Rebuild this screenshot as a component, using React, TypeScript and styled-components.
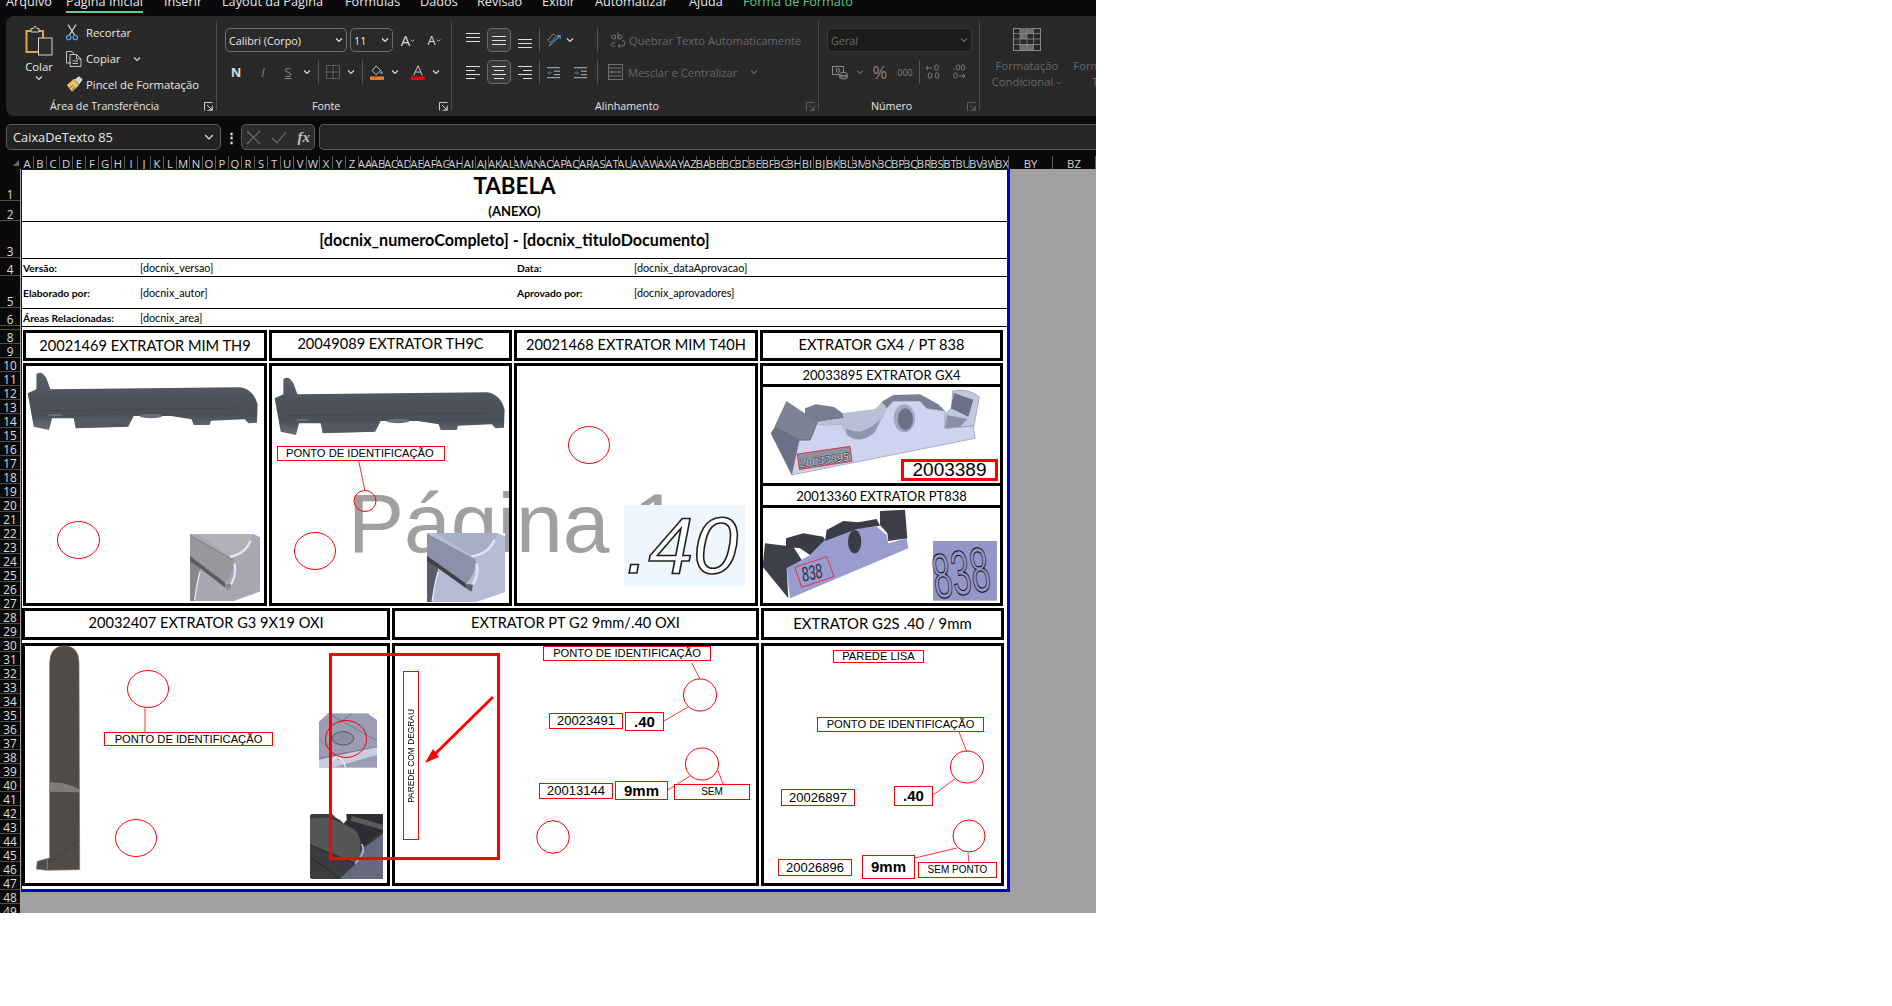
import React from "react";
import styled, { createGlobalStyle } from "styled-components";

const Global = createGlobalStyle`
  html, body { margin: 0; padding: 0; background: #fff; }
  * { box-sizing: border-box; }
`;

const UI = `"Open Sans", "Noto Sans", sans-serif`;
const SHEET = `Lato, "Liberation Sans", sans-serif`;
const ARIAL = `"Liberation Sans", Arial, sans-serif`;

const App_ = styled.div`
  width: 1096px;
  height: 913px;
  background: #0a0a0a;
  overflow: hidden;
  display: flex;
  flex-direction: column;
  font-family: ${UI};
  color: #e8e8e8;
`;

const MenuBar = styled.div`
  height: 16px;
  padding-left: 6px;
  display: flex;
  align-items: flex-start;
  overflow: hidden;
  flex: none;
`;
const Tab = styled.div<{ $w: number; $accent?: boolean }>`
  width: ${(p) => p.$w}px;
  flex: none;
  margin-top: -8px;
  font-size: 12.7px;
  line-height: 19px;
  white-space: nowrap;
  color: ${(p) => (p.$accent ? "#5fc48a" : "#e8e8e8")};
`;
const TabText = styled.span<{ $active?: boolean }>`
  display: inline-block;
  height: 21px;
  border-bottom: 2px solid ${(p) => (p.$active ? "#6fc795" : "transparent")};
`;

const Ribbon = styled.div`
  margin-left: 6px;
  height: 100px;
  padding: 5px 0 6px;
  background: #292929;
  border-radius: 8px 0 0 8px;
  display: flex;
  overflow: hidden;
  flex: none;
  font-size: 11px;
`;
const Group = styled.div<{ $w: number; $last?: boolean }>`
  width: ${(p) => p.$w}px;
  flex: none;
  display: flex;
  flex-direction: column;
  border-right: ${(p) => (p.$last ? "none" : "1px solid #4a4a4a")};
`;
const GroupBody = styled.div<{ $pl?: number; $row?: boolean }>`
  height: 76px;
  flex: none;
  padding-left: ${(p) => p.$pl ?? 0}px;
  display: flex;
  flex-direction: ${(p) => (p.$row ? "row" : "column")};
`;
const GroupFooter = styled.div<{ $pl: number; $dim?: boolean }>`
  height: 17px;
  padding: 2px 3px 0 ${(p) => p.$pl}px;
  display: flex;
  align-items: center;
  justify-content: space-between;
  font-size: 10.7px;
  line-height: 15px;
  color: #e4e4e4;
  white-space: nowrap;
  svg { color: ${(p) => (p.$dim ? "#666" : "#ddd")}; }
`;

const PasteCol = styled.div`
  width: 60px;
  flex: none;
  padding: 4px 0 0 6px;
  display: flex;
  flex-direction: column;
  align-items: center;
`;
const PasteLabel = styled.div`
  margin-top: 3px;
  font-size: 11.3px;
  line-height: 15px;
`;
const ChevWrap = styled.div<{ $ml?: number; $dim?: boolean; $w?: number }>`
  flex: none;
  display: flex;
  align-items: center;
  justify-content: center;
  width: ${(p) => p.$w ?? 10}px;
  margin-left: ${(p) => p.$ml ?? 0}px;
  color: ${(p) => (p.$dim ? "#666" : "#ddd")};
`;
const SmallCol = styled.div`
  margin-top: -1px;
  display: flex;
  flex-direction: column;
`;
const SmallRow = styled.div`
  height: 26px;
  display: flex;
  align-items: center;
  white-space: nowrap;
  font-size: 11.3px;
`;
const SmallIcon = styled.div`
  width: 20px;
  flex: none;
  display: flex;
  align-items: center;
`;

const ToolRow = styled.div<{ $mt?: number }>`
  height: 24px;
  flex: none;
  margin-top: ${(p) => p.$mt ?? 0}px;
  display: flex;
  align-items: center;
`;
const Select = styled.div<{ $w: number; $ml?: number; $dark?: boolean }>`
  width: ${(p) => p.$w}px;
  height: 24px;
  flex: none;
  margin-left: ${(p) => p.$ml ?? 0}px;
  padding: 0 3px;
  display: flex;
  align-items: center;
  justify-content: space-between;
  border: 1px solid ${(p) => (p.$dark ? "#3a3a3a" : "#6e6e6e")};
  border-radius: 5px;
  background: ${(p) => (p.$dark ? "#1c1c1c" : "#2a2a2a")};
  color: ${(p) => (p.$dark ? "#6a6a6a" : "#e8e8e8")};
  font-size: 10.8px;
  white-space: nowrap;
`;
const Tool = styled.div<{ $w: number; $ml?: number; $active?: boolean; $h?: number }>`
  width: ${(p) => p.$w}px;
  height: ${(p) => p.$h ?? 24}px;
  flex: none;
  margin-left: ${(p) => p.$ml ?? 0}px;
  display: flex;
  align-items: center;
  justify-content: center;
  border: 1px solid ${(p) => (p.$active ? "#6e6e6e" : "transparent")};
  border-radius: 5px;
  background: ${(p) => (p.$active ? "#383838" : "transparent")};
`;
const FontLetter = styled.span<{ $bold?: boolean; $italic?: boolean; $under?: boolean; $size?: number; $dim?: boolean }>`
  font-family: ${UI};
  font-size: ${(p) => p.$size ?? 13}px;
  font-weight: ${(p) => (p.$bold ? 700 : 400)};
  font-style: ${(p) => (p.$italic ? "italic" : "normal")};
  text-decoration: ${(p) => (p.$under ? "underline" : "none")};
  color: ${(p) => (p.$dim ? "#808080" : "#dadada")};
  line-height: 1;
`;
const VSep = styled.div<{ $ml?: number; $h?: number }>`
  width: 1px;
  height: ${(p) => p.$h ?? 24}px;
  flex: none;
  margin-left: ${(p) => p.$ml ?? 0}px;
  background: #555;
`;
const DisabledText = styled.span<{ $ml?: number }>`
  margin-left: ${(p) => p.$ml ?? 0}px;
  color: #676767;
  font-size: 11.2px;
  white-space: nowrap;
`;
const StyleBtn = styled.div<{ $w: number }>`
  width: ${(p) => p.$w}px;
  flex: none;
  padding-top: 7px;
  display: flex;
  flex-direction: column;
  align-items: center;
  color: #676767;
  font-size: 11.3px;
  line-height: 16px;
  white-space: nowrap;
`;
const StyleIconSlot = styled.div`
  height: 23px;
  margin-bottom: 7px;
`;

const FormulaBar = styled.div`
  height: 26px;
  margin-top: 8px;
  padding-left: 6px;
  display: flex;
  align-items: stretch;
  flex: none;
`;
const NameBox = styled.div`
  width: 215px;
  flex: none;
  padding: 0 6px;
  display: flex;
  align-items: center;
  justify-content: space-between;
  background: #232323;
  border: 1px solid #5a5a5a;
  border-radius: 5px;
  font-size: 12.8px;
`;
const Dots = styled.div`
  width: 20px;
  flex: none;
  display: flex;
  align-items: center;
  justify-content: center;
  font-weight: 700;
  font-size: 13px;
`;
const FxBox = styled.div`
  width: 74px;
  flex: none;
  padding: 0 4px;
  display: flex;
  align-items: center;
  justify-content: space-between;
  background: #2b2b2b;
  border: 1px solid #5a5a5a;
  border-radius: 5px;
`;
const Fx = styled.span`
  font-family: "Liberation Serif", serif;
  font-style: italic;
  font-size: 15px;
  font-weight: 700;
  color: #bdbdbd;
`;
const FormulaInput = styled.div`
  flex: 1;
  margin-left: 4px;
  background: #252525;
  border: 1px solid #5a5a5a;
  border-right: none;
  border-radius: 5px 0 0 5px;
`;

const ColHeader = styled.div`
  height: 13px;
  margin-top: 6px;
  display: flex;
  flex: none;
  overflow: hidden;
`;
const Corner = styled.div`
  width: 21px;
  flex: none;
  display: flex;
  align-items: center;
  justify-content: flex-end;
  padding-right: 2px;
`;
const ColCell = styled.div<{ $w: number }>`
  width: ${(p) => p.$w}px;
  flex: none;
  display: flex;
  justify-content: center;
  overflow: hidden;
  border-right: 1px solid #5c5c5c;
  font-size: 11.3px;
  line-height: 15px;
  color: #d4d4d4;
  white-space: nowrap;
`;

const Main = styled.div`
  flex: 1;
  display: flex;
  min-height: 0;
`;
const RowHeader = styled.div`
  width: 20px;
  flex: none;
  overflow: hidden;
  background: #0a0a0a;
`;
const RowCell = styled.div<{ $h: number }>`
  height: ${(p) => p.$h}px;
  display: flex;
  align-items: flex-end;
  justify-content: center;
  border-bottom: 1px solid #4c4c4c;
  font-size: 11.8px;
  line-height: 12px;
  color: #dedede;
`;
const SheetArea = styled.div`
  flex: 1;
  position: relative;
  background: #a0a0a0;
  overflow: hidden;
`;
const Sheet = styled.div`
  position: relative;
  width: 989px;
  height: 723px;
  margin-left: 1px;
  background: #fff;
  border: solid #0000c8;
  border-width: 1px 3px 3px 1px;
  font-family: ${SHEET};
  color: #000;
`;
const Watermark = styled.div`
  position: absolute;
  left: 326px;
  top: 305px;
  font-family: ${ARIAL};
  font-size: 84px;
  line-height: 96px;
  color: #a0a0a0;
  white-space: nowrap;
`;
const TitleBlock = styled.div`
  position: relative;
  height: 52px;
  padding-top: 1px;
  border-bottom: 1px solid #000;
  display: flex;
  flex-direction: column;
  align-items: center;
  font-weight: 700;
`;
const MainTitle = styled.div`
  font-size: 22.4px;
  line-height: 30px;
`;
const SubTitle = styled.div`
  font-size: 13px;
  line-height: 20px;
`;
const DocRow = styled.div`
  height: 37px;
  border-bottom: 1px solid #000;
  display: flex;
  align-items: center;
  justify-content: center;
  padding: 2px 0 4px;
  font-size: 16.1px;
  font-weight: 700;
`;
const InfoRow = styled.div<{ $h: number }>`
  height: ${(p) => p.$h}px;
  border-bottom: 1px solid #000;
  padding-left: 1px;
  display: grid;
  grid-template-columns: 117px 377px 117px 1fr;
  align-items: center;
  font-size: 10.3px;
`;
const InfoKey = styled.span`
  font-weight: 700;
  white-space: nowrap;
`;
const InfoVal = styled.span`
  font-size: 10.8px;
`;
const UpperGrid = styled.div`
  position: relative;
  margin: 3px 0 0 1px;
  display: grid;
  grid-template-columns: 244px 243px 244px 243px;
  grid-template-rows: 31px 243px;
  gap: 2px;
`;
const LowerGrid = styled.div`
  position: relative;
  margin: 2px 0 0 0;
  display: grid;
  grid-template-columns: 368px 367px 243px;
  grid-template-rows: 32px 243px;
  column-gap: 2px;
  row-gap: 3px;
`;
const Cell = styled.div<{ $up?: number; $size?: number }>`
  border: 3px solid #000;
  display: flex;
  align-items: center;
  justify-content: center;
  padding-bottom: ${(p) => p.$up ?? 0}px;
  font-size: ${(p) => p.$size ?? 14.6}px;
  white-space: nowrap;
`;
const StackCell = styled.div`
  border: 3px solid #000;
  display: grid;
  grid-template-rows: 18px 102px 19px 1fr;
`;
const SubHead = styled.div`
  display: flex;
  align-items: center;
  justify-content: center;
  font-size: 13px;
  white-space: nowrap;
`;
const SubPic = styled.div<{ $tall?: boolean }>`
  border-top: 3px solid #000;
  border-bottom: ${(p) => (p.$tall ? "0" : "3px solid #000")};
`;

const Pic = styled.svg<{ $x: number; $y: number; $w: number; $h: number }>`
  position: absolute;
  left: ${(p) => p.$x - 20}px;
  top: ${(p) => p.$y - 169}px;
  width: ${(p) => p.$w}px;
  height: ${(p) => p.$h}px;
  display: block;
`;
const Shapes = styled.svg`
  position: absolute;
  left: 0;
  top: 0;
  width: 1076px;
  height: 744px;
  pointer-events: none;
`;
const RedLabel = styled.div<{ $x: number; $y: number; $x2: number; $y2: number; $size: number; $bold?: boolean; $left?: number; $thick?: number }>`
  position: absolute;
  left: ${(p) => p.$x - 20}px;
  top: ${(p) => p.$y - 169}px;
  width: ${(p) => p.$x2 - p.$x}px;
  height: ${(p) => p.$y2 - p.$y}px;
  border: ${(p) => p.$thick ?? 1}px solid #f00;
  display: flex;
  align-items: center;
  justify-content: ${(p) => (p.$left !== undefined ? "flex-start" : "center")};
  padding-left: ${(p) => p.$left ?? 0}px;
  padding-bottom: 1px;
  font-family: ${ARIAL};
  font-size: ${(p) => p.$size}px;
  font-weight: ${(p) => (p.$bold ? 700 : 400)};
  color: #000;
  background: #fff;
  white-space: nowrap;
`;
const VerticalLabel = styled(RedLabel)`
  writing-mode: vertical-rl;
  padding: 0;
  span { transform: rotate(180deg); display: block; }
`;

const Chev = ({ s = 8 }: { s?: number }) => (
  <svg width={s} height={s} viewBox="0 0 8 8"><path d="M1 2.5 L4 5.5 L7 2.5" fill="none" stroke="currentColor" strokeWidth="1.1" /></svg>
);
const Launcher = () => (
  <svg width="9" height="9" viewBox="0 0 9 9" fill="none" stroke="currentColor" strokeWidth="0.9">
    <path d="M0.5 8.5 V0.5 H8.5" /><path d="M3 3 L8 8 M8 4.5 V8 H4.5" /><path d="M3 8.5 H8.5 V3" opacity="0.5" />
  </svg>
);
const PasteIcon = () => (
  <svg width="28" height="31" viewBox="0 0 28 31" fill="none">
    <path d="M1.5 6 H18 V27 H1.5 Z" stroke="#e9a23b" strokeWidth="2" />
    <path d="M6 6 V3.5 H8.5 L10 1 L12 3.5 H14 V7 H6 Z" fill="#2c2c2c" stroke="#cfcfcf" />
    <rect x="13.5" y="13" width="13.5" height="17" fill="#2c2c2c" stroke="#d2d2d2" />
  </svg>
);
const ScissorIcon = () => (
  <svg width="12" height="17" viewBox="0 0 12 17" fill="none">
    <path d="M2 0.5 L8.5 11 M10 0.5 L3.5 11" stroke="#dcdcdc" strokeWidth="1.2" />
    <circle cx="2.7" cy="13.5" r="2.2" stroke="#4aa3df" strokeWidth="1.3" />
    <circle cx="9.3" cy="13.5" r="2.2" stroke="#4aa3df" strokeWidth="1.3" />
  </svg>
);
const CopyIcon = () => (
  <svg width="16" height="16" viewBox="0 0 16 16" fill="none" stroke="#d4d4d4" strokeWidth="0.9">
    <path d="M5 12 H0.5 V0.5 H6 L8 3" />
    <path d="M4 3.5 H10.5 L15 8 V15.5 H4 Z" />
    <path d="M10.5 3.5 V8 H15 M6.5 10 H12 M6.5 12.5 H12" />
  </svg>
);
const PainterIcon = () => (
  <svg width="17" height="16" viewBox="0 0 17 16" fill="none">
    <path d="M1 9 L8 3 L13 9 L6 15.5 Q4 13 1 9 Z" fill="#e8c26a" stroke="#d8b25a" strokeWidth="0.5" />
    <path d="M4 12 L7 9 M6 14 L9 11" stroke="#7d6a36" />
    <path d="M9 4 L13 0.8 L16 3.5 L13 8" fill="#d8d8d8" stroke="#eee" />
  </svg>
);
const BordersIcon = () => (
  <svg width="16" height="16" viewBox="0 0 16 16" fill="none" stroke="#9a9a9a" strokeDasharray="1 1">
    <rect x="0.5" y="0.5" width="15" height="15" /><path d="M8 0 V16 M0 8 H16" />
  </svg>
);
const FillIcon = () => (
  <svg width="16" height="17" viewBox="0 0 16 17" fill="none">
    <path d="M7 1 L12 6 L7 11 L2.5 6.5 Z" stroke="#dcdcdc" /><path d="M13 6 L15 10 L11 10 Z" fill="#4aa3df" />
    <rect y="13" width="16" height="4" fill="#e97b2c" />
  </svg>
);
const ColorA = () => (
  <svg width="16" height="17" viewBox="0 0 16 17" fill="none">
    <path d="M3 12 L8 0.8 L13 12 M5 8 H11" stroke="#dcdcdc" /><rect y="13" width="16" height="4" fill="#f0000f" />
  </svg>
);
const AlignIcon = ({ kind, w = 14 }: { kind: "l" | "c" | "r" | "t" | "m" | "b"; w?: number }) => {
  const rows =
    kind === "l" ? [[0, 14], [0, 9], [0, 14], [0, 9]] :
    kind === "r" ? [[0, 14], [5, 14], [0, 14], [5, 14]] :
    kind === "c" ? [[0, 14], [2, 12], [0, 14], [2, 12]] : [[0, 14], [0, 14], [0, 14]];
  const off = kind === "t" ? -3 : kind === "b" ? 3 : 0;
  const gap = 4;
  return (
    <svg width={w} height="16" viewBox="0 0 14 16" stroke="#dedede" strokeWidth="1">
      {rows.map(([a, b], i) => (
        <line key={i} x1={a} x2={b} y1={(rows.length === 4 ? 2 : 4) + i * gap + off + 0.5} y2={(rows.length === 4 ? 2 : 4) + i * gap + off + 0.5} />
      ))}
    </svg>
  );
};
const OrientIcon = () => (
  <svg width="16" height="16" viewBox="0 0 16 16" fill="none">
    <path d="M1 8 L7 1 L10 4 L4 11 Z" stroke="#bfbfbf" strokeDasharray="2 1" />
    <path d="M2 15 L15 3 M11 3 H15 V7" stroke="#4aa3df" strokeWidth="1.2" />
  </svg>
);
const IndentIcon = ({ dir }: { dir: "in" | "out" }) => (
  <svg width="15" height="13" viewBox="0 0 15 13" fill="none" stroke="#dcdcdc">
    <path d="M0 1 H15 M8 5 H15 M8 9 H15 M0 12.5 H15" strokeWidth="0.9" />
    <path d={dir === "in" ? "M6 7 H1 M3 5 L1 7 L3 9" : "M0 7 H5 M3 5 L5 7 L3 9"} stroke="#4aa3df" strokeOpacity="0.75" />
  </svg>
);
const MergeIcon = () => (
  <svg width="15" height="16" viewBox="0 0 15 16" fill="none" stroke="#707070">
    <rect x="0.5" y="0.5" width="14" height="15" /><path d="M0 4 H15 M0 12 H15 M3 8 H12 M4.5 6 L2.5 8 L4.5 10 M10.5 6 L12.5 8 L10.5 10" />
  </svg>
);
const CurrencyIcon = () => (
  <svg width="16" height="15" viewBox="0 0 16 15" fill="none" stroke="#8a8a8a">
    <rect x="0.5" y="1.5" width="11" height="8" /><circle cx="6" cy="5.5" r="1.8" /><ellipse cx="11.5" cy="9" rx="3.8" ry="1.6" fill="#2a2a2a" /><path d="M7.8 9 V13 Q11.5 15.5 15.2 13 V9 M7.8 11 Q11.5 13.5 15.2 11" />
  </svg>
);
const DecimalIcon = ({ up }: { up: boolean }) => (
  <svg width="16" height="16" viewBox="0 0 16 16" fill="none" stroke="#858585" strokeWidth="0.9">
    {up ? (
      <>
        <path d="M1 4 H7 M3 2 L1 4 L3 6" /><ellipse cx="11.5" cy="3.5" rx="1.8" ry="2.8" />
        <path d="M0.8 13.5 V14" /><ellipse cx="5" cy="11.5" rx="1.8" ry="2.8" /><ellipse cx="12" cy="11.5" rx="1.8" ry="2.8" />
      </>
    ) : (
      <>
        <path d="M9 12 H15 M13 10 L15 12 L13 14" /><ellipse cx="5.5" cy="11.5" rx="1.8" ry="2.8" />
        <path d="M4 4.5 V5.5" /><ellipse cx="8" cy="3.5" rx="1.8" ry="2.8" /><ellipse cx="13" cy="3.5" rx="1.8" ry="2.8" />
      </>
    )}
  </svg>
);
const WrapIcon = () => (
  <svg width="16" height="16" viewBox="0 0 16 16" fill="none" stroke="#707070">
    <circle cx="3.5" cy="5" r="2" /><path d="M5.5 3 V7 M8 0.5 V7" /><circle cx="10" cy="5" r="2" />
    <path d="M5 11 A2 2 0 1 0 5 14" /><path d="M8 14 H12 Q15 14 15 11 Q15 8.5 12 8.5 M10 12 L8 14 L10 16" />
  </svg>
);
const CondIcon = () => (
  <svg width="28" height="23" viewBox="0 0 28 23">
    <rect x="0.5" y="0.5" width="27" height="22" fill="none" stroke="#8a8a8a" />
    <path d="M7 0 H20 V6 H14 V11 H7 V16 H20 V22 H7 V0" fill="#6e6e6e" />
    <path d="M0 5.5 H28 M0 11 H28 M0 16.5 H28 M7 0 V23 M14 0 V23 M20.5 0 V23" stroke="#8a8a8a" strokeWidth="0.8" />
  </svg>
);
const XMark = () => <svg width="15" height="15" viewBox="0 0 15 15"><path d="M1 1 L14 14 M14 1 L1 14" stroke="#707070" strokeWidth="1.1" /></svg>;
const CheckMark = () => <svg width="16" height="13" viewBox="0 0 16 13"><path d="M1 7 L6 12 L15 1" fill="none" stroke="#707070" strokeWidth="1.1" /></svg>;

const Soft = ({ id, d = 1 }: { id: string; d?: number }) => (
  <filter id={id} x="-5%" y="-5%" width="110%" height="110%"><feGaussianBlur stdDeviation={d} /></filter>
);

const ExtractorSide = ({ x, y, id }: { x: number; y: number; id: string }) => (
  <Pic $x={x} $y={y} $w={233.3} $h={63.3} viewBox="80 630 700 190">
    <defs>
      <linearGradient id={id + "g"} x1="0" y1="0" x2="0" y2="1"><stop offset="0" stopColor="#5c6069" /><stop offset="0.45" stopColor="#4d5159" /><stop offset="0.75" stopColor="#4c5058" /><stop offset="1" stopColor="#6a6e77" /></linearGradient>
      <Soft id={id} d={2} />
    </defs>
    <g filter={`url(#${id})`}>
      <path d="M108 642 Q125 630 138 655 L150 688 L720 682 Q762 690 772 735 L770 788 L745 790 L733 778 L632 782 L628 795 L580 795 L574 778 L512 768 L400 768 L384 800 L226 805 L220 775 L155 775 L146 810 L100 800 L82 700 L108 688 Z" fill={`url(#${id}g)`} />
      <path d="M120 752 L720 744" stroke="#3e4148" strokeWidth="2" fill="none" />
      <path d="M225 772 L385 772 L380 800 L226 803 Z" fill="#555962" />
      <ellipse cx="452" cy="768" rx="34" ry="7" fill="#6b6f79" />
      <ellipse cx="165" cy="765" rx="22" ry="3" fill="#6b6f79" />
    </g>
  </Pic>
);
const CornerPart = ({ x, y, w, h, c, id }: { x: number; y: number; w: number; h: number; c: string[]; id: string }) => (
  <Pic $x={x} $y={y} $w={w} $h={h} viewBox="0 0 210 200" preserveAspectRatio="none">
    <defs><Soft id={id} d={1} /></defs>
    <rect width="210" height="200" fill={c[0]} />
    <g filter={`url(#${id})`}>
      <path d="M0 70 L30 100 L28 120 L14 200 H0 Z" fill={c[3]} />
      <path d="M30 112 Q20 150 14 198" stroke="#e4e6f2" strokeWidth="4" fill="none" />
      <path d="M0 67 L105 147 L105 160 L30 102 L0 82 Z" fill={c[4]} />
      <path d="M0 4 L115 72 L132 82 Q128 125 105 147 L0 67 Z" fill={c[1]} />
      <path d="M22 0 L115 62 L130 70 L165 45 L185 15 L190 0 Z" fill={c[2]} />
      <path d="M0 4 L115 70 L130 78" stroke="#4c4c52" strokeWidth="1.4" fill="none" />
      <path d="M0 67 L105 147" stroke="#33333a" strokeWidth="1.6" fill="none" />
      <path d="M120 68 Q155 62 172 38 L182 20" stroke="#e2e4f2" strokeWidth="7" fill="none" />
      <path d="M134 88 Q140 125 122 152" stroke="#e2e4f2" strokeWidth="7" fill="none" />
      <path d="M106 148 L124 150 L120 170 L105 160 Z" fill={c[3]} />
    </g>
    <path d="M190 0 H210 V10 Z M210 172 V200 H132 Z" fill="#fff" />
  </Pic>
);

const App = () => {
  const letters = "ABCDEFGHIJKLMNOPQRSTUVWXYZ".split("");
  const cols = [...letters, ...letters.map((l) => "A" + l), ...letters.slice(0, 24).map((l) => "B" + l)];
  const rows: [string, number][] = [["1", 32], ["2", 20], ["3", 37], ["4", 18], ["5", 32], ["6", 18], ["", 4]];
  for (let i = 8; i <= 49; i++) rows.push([String(i), 14]);
  const tabs: [string, number][] = [["Arquivo", 60], ["Página Inicial", 98], ["Inserir", 58], ["Layout da Página", 123], ["Fórmulas", 75], ["Dados", 57], ["Revisão", 65], ["Exibir", 53], ["Automatizar", 94], ["Ajuda", 54], ["Forma de Formato", 130]];
  const ellipses = [
    [78.5, 540, 21, 18.5], [315, 551, 20.5, 18.5], [365, 501, 11, 10.5], [589, 445, 20.5, 18.5],
    [148, 689, 20.5, 18.5], [136, 838, 20.5, 18.5], [346, 739, 20.5, 18.5],
    [700, 695, 16.7, 16], [702, 764, 16.7, 16], [553, 837, 16.3, 16.3], [967, 767, 16.7, 16], [969, 836, 16, 16],
  ];
  const lines = [
    [358.7, 461, 365, 491], [145, 707, 145, 732], [691.7, 663, 700, 679], [664, 721, 688, 707],
    [668, 790, 690, 776], [717, 768, 723, 784], [959, 732, 967, 752], [933, 795, 955, 779],
    [915, 858, 957, 848], [968, 853, 969, 863],
  ];
  return (
    <App_>
      <Global />
      <MenuBar>
        {tabs.map(([t, w]) => (
          <Tab key={t} $w={w} $accent={t === "Forma de Formato"}>
            <TabText $active={t === "Página Inicial"}>{t}</TabText>
          </Tab>
        ))}
      </MenuBar>
      <Ribbon>
        <Group $w={211}>
          <GroupBody $row>
            <PasteCol>
              <PasteIcon />
              <PasteLabel>Colar</PasteLabel>
              <ChevWrap><Chev /></ChevWrap>
            </PasteCol>
            <SmallCol>
              <SmallRow><SmallIcon><ScissorIcon /></SmallIcon>Recortar</SmallRow>
              <SmallRow><SmallIcon><CopyIcon /></SmallIcon>Copiar<ChevWrap $ml={11}><Chev /></ChevWrap></SmallRow>
              <SmallRow><SmallIcon><PainterIcon /></SmallIcon>Pincel de Formatação</SmallRow>
            </SmallCol>
          </GroupBody>
          <GroupFooter $pl={44}><span>Área de Transferência</span><Launcher /></GroupFooter>
        </Group>
        <Group $w={235}>
          <GroupBody $pl={8}>
            <ToolRow $mt={7}>
              <Select $w={122}>Calibri (Corpo)<Chev /></Select>
              <Select $w={43} $ml={3}>11<Chev /></Select>
              <Tool $w={22} $ml={4}><FontLetter $size={15}>A</FontLetter><Chev s={5} /></Tool>
              <Tool $w={22} $ml={4}><FontLetter $size={13}>A</FontLetter><Chev s={5} /></Tool>
            </ToolRow>
            <ToolRow $mt={8}>
              <Tool $w={22}><FontLetter $bold>N</FontLetter></Tool>
              <Tool $w={22} $ml={5}><FontLetter $italic $dim>I</FontLetter></Tool>
              <Tool $w={22} $ml={3}><FontLetter $under $dim>S</FontLetter></Tool>
              <ChevWrap $ml={3}><Chev /></ChevWrap>
              <VSep $ml={6} />
              <Tool $w={16} $ml={6}><BordersIcon /></Tool>
              <ChevWrap $ml={5}><Chev /></ChevWrap>
              <VSep $ml={6} />
              <Tool $w={16} $ml={6}><FillIcon /></Tool>
              <ChevWrap $ml={5}><Chev /></ChevWrap>
              <Tool $w={16} $ml={10}><ColorA /></Tool>
              <ChevWrap $ml={5}><Chev /></ChevWrap>
            </ToolRow>
          </GroupBody>
          <GroupFooter $pl={95}><span>Fonte</span><Launcher /></GroupFooter>
        </Group>
        <Group $w={367}>
          <GroupBody $pl={9}>
            <ToolRow $mt={7}>
              <Tool $w={24}><AlignIcon kind="t" /></Tool>
              <Tool $w={24} $ml={2} $active><AlignIcon kind="m" /></Tool>
              <Tool $w={24} $ml={2}><AlignIcon kind="b" /></Tool>
              <VSep $ml={2} />
              <Tool $w={16} $ml={6}><OrientIcon /></Tool>
              <ChevWrap $ml={3}><Chev /></ChevWrap>
              <VSep $ml={22} />
              <ChevWrap $w={16} $ml={12}><WrapIcon /></ChevWrap>
              <DisabledText $ml={3}>Quebrar Texto Automaticamente</DisabledText>
            </ToolRow>
            <ToolRow $mt={8}>
              <Tool $w={24}><AlignIcon kind="l" /></Tool>
              <Tool $w={24} $ml={2} $active><AlignIcon kind="c" /></Tool>
              <Tool $w={24} $ml={2}><AlignIcon kind="r" /></Tool>
              <VSep $ml={2} />
              <Tool $w={15} $ml={6}><IndentIcon dir="in" /></Tool>
              <Tool $w={15} $ml={12}><IndentIcon dir="out" /></Tool>
              <VSep $ml={9} />
              <ChevWrap $w={15} $ml={10}><MergeIcon /></ChevWrap>
              <DisabledText $ml={5}>Mesclar e Centralizar</DisabledText>
              <ChevWrap $ml={12} $dim><Chev /></ChevWrap>
            </ToolRow>
          </GroupBody>
          <GroupFooter $pl={143} $dim><span>Alinhamento</span><Launcher /></GroupFooter>
        </Group>
        <Group $w={161}>
          <GroupBody $pl={8}>
            <ToolRow $mt={7}>
              <Select $w={145} $dark>Geral<Chev /></Select>
            </ToolRow>
            <ToolRow $mt={8}>
              <ChevWrap $w={16} $ml={5}><CurrencyIcon /></ChevWrap>
              <ChevWrap $ml={7} $dim><Chev /></ChevWrap>
              <Tool $w={18} $ml={6}><FontLetter $size={18} $dim>%</FontLetter></Tool>
              <Tool $w={18} $ml={7}><FontLetter $size={9} $dim>000</FontLetter></Tool>
              <VSep $ml={5} />
              <ChevWrap $w={16} $ml={5}><DecimalIcon up /></ChevWrap>
              <ChevWrap $w={16} $ml={9}><DecimalIcon up={false} /></ChevWrap>
            </ToolRow>
          </GroupBody>
          <GroupFooter $pl={52} $dim><span>Número</span><Launcher /></GroupFooter>
        </Group>
        <Group $w={116} $last>
          <GroupBody $row $pl={3}>
            <StyleBtn $w={88}>
              <StyleIconSlot><CondIcon /></StyleIconSlot>
              <span>Formatação</span>
              <span>Condicional <Chev s={6} /></span>
            </StyleBtn>
            <StyleBtn $w={86}>
              <StyleIconSlot />
              <span>Formatar como</span>
              <span>Tabela <Chev s={6} /></span>
            </StyleBtn>
          </GroupBody>
        </Group>
      </Ribbon>
      <FormulaBar>
        <NameBox>CaixaDeTexto 85<Chev s={10} /></NameBox>
        <Dots>⋮</Dots>
        <FxBox><XMark /><CheckMark /><Fx>fx</Fx></FxBox>
        <FormulaInput />
      </FormulaBar>
      <ColHeader>
        <Corner><svg width="6" height="6" viewBox="0 0 6 6"><path d="M6 0 V6 H0 Z" fill="#6a6a6a" /></svg></Corner>
        {cols.map((c) => <ColCell key={c} $w={13}>{c}</ColCell>)}
        <ColCell $w={44}>BY</ColCell>
        <ColCell $w={43}>BZ</ColCell>
      </ColHeader>
      <Main>
        <RowHeader>
          {rows.map(([r, h], i) => <RowCell key={i} $h={h}>{r}</RowCell>)}
        </RowHeader>
        <SheetArea>
          <Sheet>
            <Watermark>Página 1</Watermark>
            <TitleBlock>
              <MainTitle>TABELA</MainTitle>
              <SubTitle>(ANEXO)</SubTitle>
            </TitleBlock>
            <DocRow>[docnix_numeroCompleto] - [docnix_tituloDocumento]</DocRow>
            <InfoRow $h={18}><InfoKey>Versão:</InfoKey><InfoVal>[docnix_versao]</InfoVal><InfoKey>Data:</InfoKey><InfoVal>[docnix_dataAprovacao]</InfoVal></InfoRow>
            <InfoRow $h={32}><InfoKey>Elaborado por:</InfoKey><InfoVal>[docnix_autor]</InfoVal><InfoKey>Aprovado por:</InfoKey><InfoVal>[docnix_aprovadores]</InfoVal></InfoRow>
            <InfoRow $h={18}><InfoKey>Áreas Relacionadas:</InfoKey><InfoVal>[docnix_area]</InfoVal></InfoRow>
            <UpperGrid>
              <Cell>20021469 EXTRATOR MIM TH9</Cell>
              <Cell $up={4}>20049089 EXTRATOR TH9C</Cell>
              <Cell $up={2}>20021468 EXTRATOR MIM T40H</Cell>
              <Cell $up={2}>EXTRATOR GX4 / PT 838</Cell>
              <Cell />
              <Cell />
              <Cell />
              <StackCell>
                <SubHead>20033895 EXTRATOR GX4</SubHead>
                <SubPic />
                <SubHead>20013360 EXTRATOR PT838</SubHead>
                <SubPic $tall />
              </StackCell>
            </UpperGrid>
            <LowerGrid>
              <Cell $up={4}>20032407 EXTRATOR G3 9X19 OXI</Cell>
              <Cell $up={4}>EXTRATOR PT G2 9mm/.40 OXI</Cell>
              <Cell $up={2} $size={14.9}>EXTRATOR G2S .40 / 9mm</Cell>
              <Cell />
              <Cell />
              <Cell />
            </LowerGrid>
          </Sheet>

          <ExtractorSide x={26.67} y={370} id="exa" />
          <ExtractorSide x={273.7} y={375} id="exb" />
          <CornerPart id="cpa" x={190} y={534} w={70} h={67} c={["#a8a7b3", "#98989c", "#b2b2b6", "#88888c", "#5c5c62"]} />
          <CornerPart id="cpb" x={427} y={533} w={78} h={69} c={["#b6bcd6", "#8c91aa", "#a9aec6", "#5a5c6a", "#40414c"]} />

          <Pic $x={624} $y={505} $w={121} $h={82} viewBox="0 0 121 82">
            <rect width="121" height="82" fill="#f0f6fd" />
            <text x="2" y="68" fontFamily={ARIAL} fontStyle="italic" fontSize="80" fill="#fff" stroke="#1e1e1e" strokeWidth="1.6" textLength="112" lengthAdjust="spacingAndGlyphs">.40</text>
          </Pic>

          <Pic $x={760} $y={385} $w={245} $h={100} viewBox="0 0 735 300">
            <defs><Soft id="gx" d={1.2} /></defs>
            <g filter="url(#gx)">
              <path d="M95 270 L118 165 L150 165 L172 115 L190 120 L245 118 L262 150 Q300 180 345 140 Q365 100 380 70 L400 48 L480 48 L500 70 L555 78 L555 130 L640 122 L645 160 Z" fill="#cdd4f0" stroke="#8d93ad" strokeWidth="2" />
              <path d="M245 85 L345 72 Q360 60 365 50 L380 70 Q365 100 345 140 Q300 180 262 150 L245 118 Z" fill="#b9bfd6" />
              <path d="M262 150 Q300 180 345 140 L362 100 Q340 130 300 140 Q275 140 258 130 Z" fill="#8f95ae" />
              <path d="M32 145 L95 270 L118 165 L45 125 Z" fill="#6b7085" />
              <path d="M45 125 L80 50 L172 112 L150 165 L118 165 Z" fill="#7d8296" stroke="#555a6a" strokeWidth="2" />
              <path d="M135 70 L168 58 L222 66 L248 85 L250 100 L192 108 L172 112 L135 88 Z" fill="#777c90" />
              <path d="M172 112 L192 108 L250 100 L245 118 L190 120 Z" fill="#b9bfd6" />
              <path d="M365 50 L400 30 L480 28 L535 58 L555 78 L500 70 L480 48 L400 48 L380 70 Z" fill="#7a7f93" />
              <ellipse cx="433" cy="100" rx="32" ry="42" fill="#a3a9c2" />
              <ellipse cx="436" cy="103" rx="23" ry="33" fill="#6c7185" />
              <path d="M555 130 L558 85 L575 68 L578 18 Q625 8 658 36 L642 122 Z" fill="#c2c8e2" stroke="#8d93ad" strokeWidth="2" />
              <path d="M582 24 L640 44 L625 95 L572 70 Z" fill="#6c7188" />
              <path d="M562 90 L622 102 L600 125 L556 128 Z" fill="#8a90a6" />
            </g>
            <path d="M112 207 L270 184 L276 229 L118 254 Z" fill="#8c91a3" stroke="#f00" strokeWidth="2" />
            <text x="120" y="248" transform="rotate(-8 120 248)" fontFamily={ARIAL} fontStyle="italic" fontWeight="700" fontSize="36" fill="#e4e6ee" stroke="#1f2028" strokeWidth="1.5" textLength="150" lengthAdjust="spacingAndGlyphs">20033895</text>
          </Pic>

          <Pic $x={760} $y={505} $w={245} $h={100} viewBox="0 0 735 300">
            <defs><Soft id="pt" d={1.2} /></defs>
            <g filter="url(#pt)">
              <path d="M90 280 L80 190 L150 150 L195 105 L290 70 L350 65 L380 90 L385 115 L440 100 L445 130 Z" fill="#9a9bcf" />
              <path d="M8 185 L85 280 L80 190 L125 165 L100 125 L15 115 Z" fill="#3e3f48" />
              <path d="M78 100 L130 85 L190 95 L195 105 L150 150 L120 130 L78 125 Z" fill="#3a3b44" />
              <path d="M200 75 L250 48 L295 52 L350 42 L360 62 L290 72 L195 108 Z" fill="#3a3b44" />
              <path d="M360 18 L435 14 L442 100 L385 108 L382 85 L360 60 Z" fill="#3c3d46" />
              <ellipse cx="284" cy="110" rx="20" ry="35" fill="#3a3b45" />
            </g>
            <path d="M105 187 L200 155 L222 215 L125 247 Z" fill="none" stroke="#f00" strokeWidth="2" />
            <text x="130" y="230" transform="rotate(-12 130 230)" fontFamily={ARIAL} fontStyle="italic" fontSize="62" fill="#2e2f3a" textLength="62" lengthAdjust="spacingAndGlyphs">838</text>
            <rect x="519" y="108" width="192" height="179" fill="#9596c8" />
            <text x="528" y="282" transform="rotate(-9 528 282)" fontFamily={ARIAL} fontSize="190" fill="none" stroke="#16161c" strokeWidth="3.4" textLength="172" lengthAdjust="spacingAndGlyphs">838</text>
          </Pic>

          <Pic $x={33.3} $y={643.3} $w={50} $h={230} viewBox="100 130 150 690">
            <path d="M150 190 Q150 140 195 138 Q238 140 238 190 L240 810 L140 812 L110 808 L113 785 L150 775 Z" fill="#4e4b48" stroke="#77756f" strokeWidth="2" />
            <path d="M150 548 Q195 545 238 568 L238 578 L150 576 Z" fill="#7f7c77" />
            <path d="M150 790 L238 720" stroke="#3a3836" strokeWidth="2" />
            <path d="M143 780 V810" stroke="#8a8782" strokeWidth="3" />
          </Pic>

          <Pic $x={319} $y={713} $w={58} $h={55} viewBox="0 0 174 163">
            <rect width="174" height="163" fill="#9c9db4" />
            <path d="M0 0 H28 L0 25 Z M145 0 H174 V20 Z" fill="#fff" />
            <path d="M0 140 L174 100 V125 L40 163 H0 Z" fill="#c9cde0" />
            <path d="M28 0 L174 82 M100 0 L60 30 M0 75 L60 140 M0 135 L174 100" stroke="#4f5060" strokeWidth="1.5" fill="none" />
            <ellipse cx="72" cy="75" rx="32" ry="20" fill="#8e8fa6" stroke="#35353f" strokeWidth="2" />
            <path d="M45 135 Q70 125 80 163 M35 150 L55 125" stroke="#fff" strokeWidth="3" fill="none" />
          </Pic>

          <Pic $x={310} $y={814} $w={73} $h={65} viewBox="0 0 218 194">
            <defs><Soft id="dk" d={1} /></defs>
            <rect width="218" height="194" rx="6" fill="#3c3c3e" />
            <g filter="url(#dk)">
              <path d="M88 194 L135 150 L155 105 L218 60 V194 Z" fill="#666880" />
              <path d="M110 0 H218 V50 L158 98 L140 55 L105 28 Z" fill="#2e2e30" />
              <path d="M125 6 L218 32 V48 L122 20 Z" fill="#5a5a5c" />
              <path d="M0 14 L55 10 L130 45 Q150 60 150 90 L150 115 L135 145 L0 90 Z" fill="#565656" />
              <path d="M155 90 Q165 110 150 130 L135 148" stroke="#b9bcdc" strokeWidth="5" fill="none" />
              <path d="M0 92 L130 147 M0 128 L92 194" stroke="#222" strokeWidth="2" fill="none" />
            </g>
            <path d="M66 0 H108 L110 18 L100 28 L90 18 L78 12 Z" fill="#fff" />
          </Pic>

          <Shapes viewBox="20 169 1076 744">
            {ellipses.map(([cx, cy, rx, ry], i) => (
              <ellipse key={i} cx={cx} cy={cy} rx={rx} ry={ry} fill="none" stroke="#f00" strokeWidth="1" />
            ))}
            {lines.map(([x1, y1, x2, y2], i) => (
              <line key={i} x1={x1} y1={y1} x2={x2} y2={y2} stroke="#f33" strokeWidth="1" />
            ))}
            <rect x="330.5" y="654.5" width="168" height="204" fill="none" stroke="#f00" strokeWidth="3" />
            <line x1="493" y1="697" x2="434" y2="755" stroke="#f00" strokeWidth="3" />
            <polygon points="425,763 433,749 439,757" fill="#f00" />
          </Shapes>

          <RedLabel $x={277} $y={446} $x2={445} $y2={461} $size={11.2} $left={8}>PONTO DE IDENTIFICAÇÃO</RedLabel>
          <RedLabel $x={901} $y={459} $x2={998} $y2={481} $size={19} $thick={3}>2003389</RedLabel>
          <RedLabel $x={104} $y={732} $x2={273} $y2={746} $size={11.2}>PONTO DE IDENTIFICAÇÃO</RedLabel>
          <VerticalLabel $x={403} $y={671} $x2={419} $y2={840} $size={8.4}><span>PAREDE COM DEGRAU</span></VerticalLabel>
          <RedLabel $x={543} $y={646} $x2={711} $y2={661} $size={11.2}>PONTO DE IDENTIFICAÇÃO</RedLabel>
          <RedLabel $x={549} $y={713} $x2={623} $y2={729} $size={13}>20023491</RedLabel>
          <RedLabel $x={625} $y={712} $x2={664} $y2={731} $size={15} $bold>.40</RedLabel>
          <RedLabel $x={539} $y={783} $x2={613} $y2={799} $size={13}>20013144</RedLabel>
          <RedLabel $x={615} $y={781} $x2={668} $y2={800} $size={15} $bold>9mm</RedLabel>
          <RedLabel $x={674} $y={784} $x2={750} $y2={800} $size={10}>SEM</RedLabel>
          <RedLabel $x={833} $y={650} $x2={924} $y2={663} $size={11.2}>PAREDE LISA</RedLabel>
          <RedLabel $x={817} $y={717} $x2={984} $y2={732} $size={11.2}>PONTO DE IDENTIFICAÇÃO</RedLabel>
          <RedLabel $x={781} $y={789} $x2={855} $y2={806} $size={13}>20026897</RedLabel>
          <RedLabel $x={894} $y={786} $x2={933} $y2={806} $size={15} $bold>.40</RedLabel>
          <RedLabel $x={778} $y={859} $x2={852} $y2={876} $size={13}>20026896</RedLabel>
          <RedLabel $x={862} $y={855} $x2={915} $y2={879} $size={15} $bold>9mm</RedLabel>
          <RedLabel $x={918} $y={862} $x2={997} $y2={878} $size={10}>SEM PONTO</RedLabel>
        </SheetArea>
      </Main>
    </App_>
  );
};

export default App;
